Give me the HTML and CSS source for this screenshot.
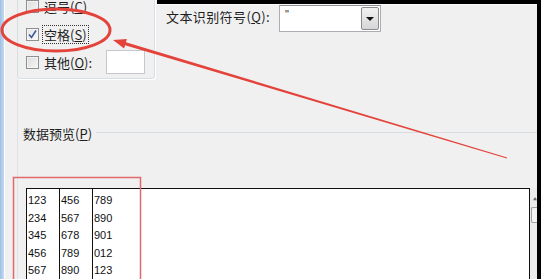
FILE: index.html
```html
<!DOCTYPE html>
<html>
<head>
<meta charset="utf-8">
<link rel="stylesheet" href="styles.css">
</head>
<body>
<div class="page">
  <div class="lstrip"></div>
  <div class="main">
    <div class="top">
      <div class="opts">
        <div class="row"><span class="cb"></span><span class="lbl">逗号(<u>C</u>)</span></div>
        <div class="row"><span class="cb checked"><svg width="11" height="11" viewBox="0 0 11 11"><path d="M2 5.5 L4.5 8.5 L9 1.5" fill="none" stroke="#3a5a9c" stroke-width="1.6"/></svg></span><span class="lbl focus">空格(<u>S</u>)</span></div>
        <div class="row"><span class="cb"></span><span class="lbl other">其他(<u>O</u>):</span><span class="field"></span></div>
      </div>
      <div class="quote">
        <span class="qlabel">文本识别符号(<u>Q</u>):</span>
        <div class="combo">
          <span class="cval">"</span>
          <span class="cbtn"><span class="tri"></span></span>
        </div>
      </div>
    </div>
    <div class="preview">
      <div class="legend"><span class="ltext">数据预览(<u>P</u>)</span><span class="lline"></span></div>
      <div class="pbody">
        <div class="pbox">
          <div class="col c1"><div>123</div><div>234</div><div>345</div><div>456</div><div>567</div></div>
          <div class="col c2"><div>456</div><div>567</div><div>678</div><div>789</div><div>890</div></div>
          <div class="col c3"><div>789</div><div>890</div><div>901</div><div>012</div><div>123</div></div>
        </div>
        <div class="sbar"><span class="sarrow">▲</span><span class="thumb"></span></div>
      </div>
    </div>
  </div>
  <div class="rstrip"></div>
  <svg class="notes" width="541" height="279" viewBox="0 0 541 279">
    <ellipse cx="56" cy="30" rx="54" ry="21" fill="none" stroke="#e3433b" stroke-width="3"/>
    <polygon points="113,40 124.1,48.5 125.07,45.14 506.86,158.48 507.14,157.52 125.93,42.26 126.9,38.9" fill="#e3433b"/>
    <rect x="13.5" y="177.5" width="127" height="120" fill="none" stroke="#e06a6a" stroke-width="1.5"/>
  </svg>
</div>
</body>
</html>
```
FILE: styles.css
```css
html, body {
  margin: 0;
  padding: 0;
  background: #f0f0f0;
}
.page {
  position: relative;
  width: 541px;
  height: 279px;
  overflow: hidden;
  display: flex;
  background: #f0f0f0;
  font-family: "Noto Sans CJK SC", "Liberation Sans", sans-serif;
  font-size: 13px;
  color: #1e1e1e;
}
.lstrip {
  width: 4px;
  background: linear-gradient(to right, #9fbfe4, #c6daf1);
  border-right: 1px solid #fbfdff;
  flex: none;
}
.rstrip {
  width: 4px;
  background: #000;
  flex: none;
}
.main {
  flex: 1;
  display: flex;
  flex-direction: column;
  min-width: 0;
}
.top {
  display: flex;
  height: 80px;
  flex: none;
}
.opts {
  margin-left: 12px;
  margin-top: -12px;
  width: 128px;
  height: 86px;
  border: 1px solid #d5dfe5;
  border-radius: 3px;
  box-shadow: 1px 1px 0 #fff;
  padding-top: 3px;
  padding-left: 8px;
  flex: none;
  box-sizing: content-box;
}
.row {
  height: 28px;
  display: flex;
  align-items: center;
}
.cb {
  width: 11px;
  height: 11px;
  border: 1px solid #8e8f8f;
  background: linear-gradient(135deg, #dcdcdc, #f6f6f6);
  box-shadow: inset 0 0 0 1px #f4f4f4;
  display: flex;
  align-items: center;
  justify-content: center;
  flex: none;
}
.cb.checked {
  background: linear-gradient(135deg, #e4e4e4, #fafafa);
}
.lbl {
  margin-left: 4px;
  padding: 0 1px;
  line-height: 17px;
}
.lbl.focus {
  outline: 1px dotted #333;
  outline-offset: 0;
}
.field {
  margin-left: 13px;
  width: 37px;
  height: 22px;
  background: #fff;
  border: 1px solid #c4c8ce;
}
.quote {
  flex: 1;
  margin-left: 2px;
  border-top: 4px solid #000;
  display: flex;
  align-items: flex-start;
  padding-left: 9px;
  box-shadow: inset 0 1px 0 #fafafa;
}
.qlabel {
  width: 113px;
  margin-top: 4px;
  line-height: 17px;
  letter-spacing: 0.4px;
  flex: none;
}
.combo {
  margin-top: 1px;
  width: 100px;
  height: 25px;
  border: 1px solid #abadb3;
  border-top-color: #8c8f95;
  background: #fff;
  display: flex;
  align-items: stretch;
}
.cval {
  flex: 1;
  padding-left: 5px;
  font-family: "Liberation Sans", sans-serif;
  font-size: 11px;
  line-height: 16px;
}
.cbtn {
  width: 16px;
  margin: 1px 1px 1px 0;
  border: 1px solid #8b8b8b;
  border-radius: 2px;
  background: linear-gradient(to bottom, #f2f2f2, #d6d6d6);
  display: flex;
  align-items: center;
  justify-content: center;
}
.tri {
  width: 0;
  height: 0;
  border-left: 4px solid transparent;
  border-right: 4px solid transparent;
  border-top: 4px solid #111;
}
.preview {
  flex: 1;
  margin-left: 12px;
  border-left: 1px solid #dde3e8;
  display: flex;
  flex-direction: column;
}
.legend {
  margin-top: 46px;
  height: 16px;
  display: flex;
  align-items: center;
}
.ltext {
  margin-left: 5px;
  line-height: 16px;
}
.lline {
  flex: 1;
  margin-left: 4px;
  height: 1px;
  background: #d8dde2;
  margin-top: -4px;
}
.pbody {
  margin-top: 46px;
  margin-left: 8px;
  display: flex;
  flex: 1;
}
.pbox {
  width: 502px;
  border: 1px solid #111;
  border-bottom: none;
  background: #fff;
  display: flex;
  font-family: "Liberation Sans", sans-serif;
  font-size: 11px;
  line-height: 17.5px;
  color: #111;
  flex: none;
}
.col {
  padding-top: 3px;
  padding-left: 1px;
}
.c1, .c2 {
  width: 31px;
  border-right: 1px solid #111;
}
.sbar {
  width: 7px;
  display: flex;
  flex-direction: column;
  align-items: flex-end;
  background: #ececec;
}
.sarrow {
  font-size: 4px;
  line-height: 4px;
  margin-top: 9px;
  color: #666;
}
.thumb {
  margin-top: 6px;
  width: 5px;
  height: 14px;
  border: 1px solid #a0a0a0;
  border-right: none;
  border-radius: 2px 0 0 2px;
  background: #f4f4f4;
}
.notes {
  position: absolute;
  left: 0;
  top: 0;
  pointer-events: none;
}
```
